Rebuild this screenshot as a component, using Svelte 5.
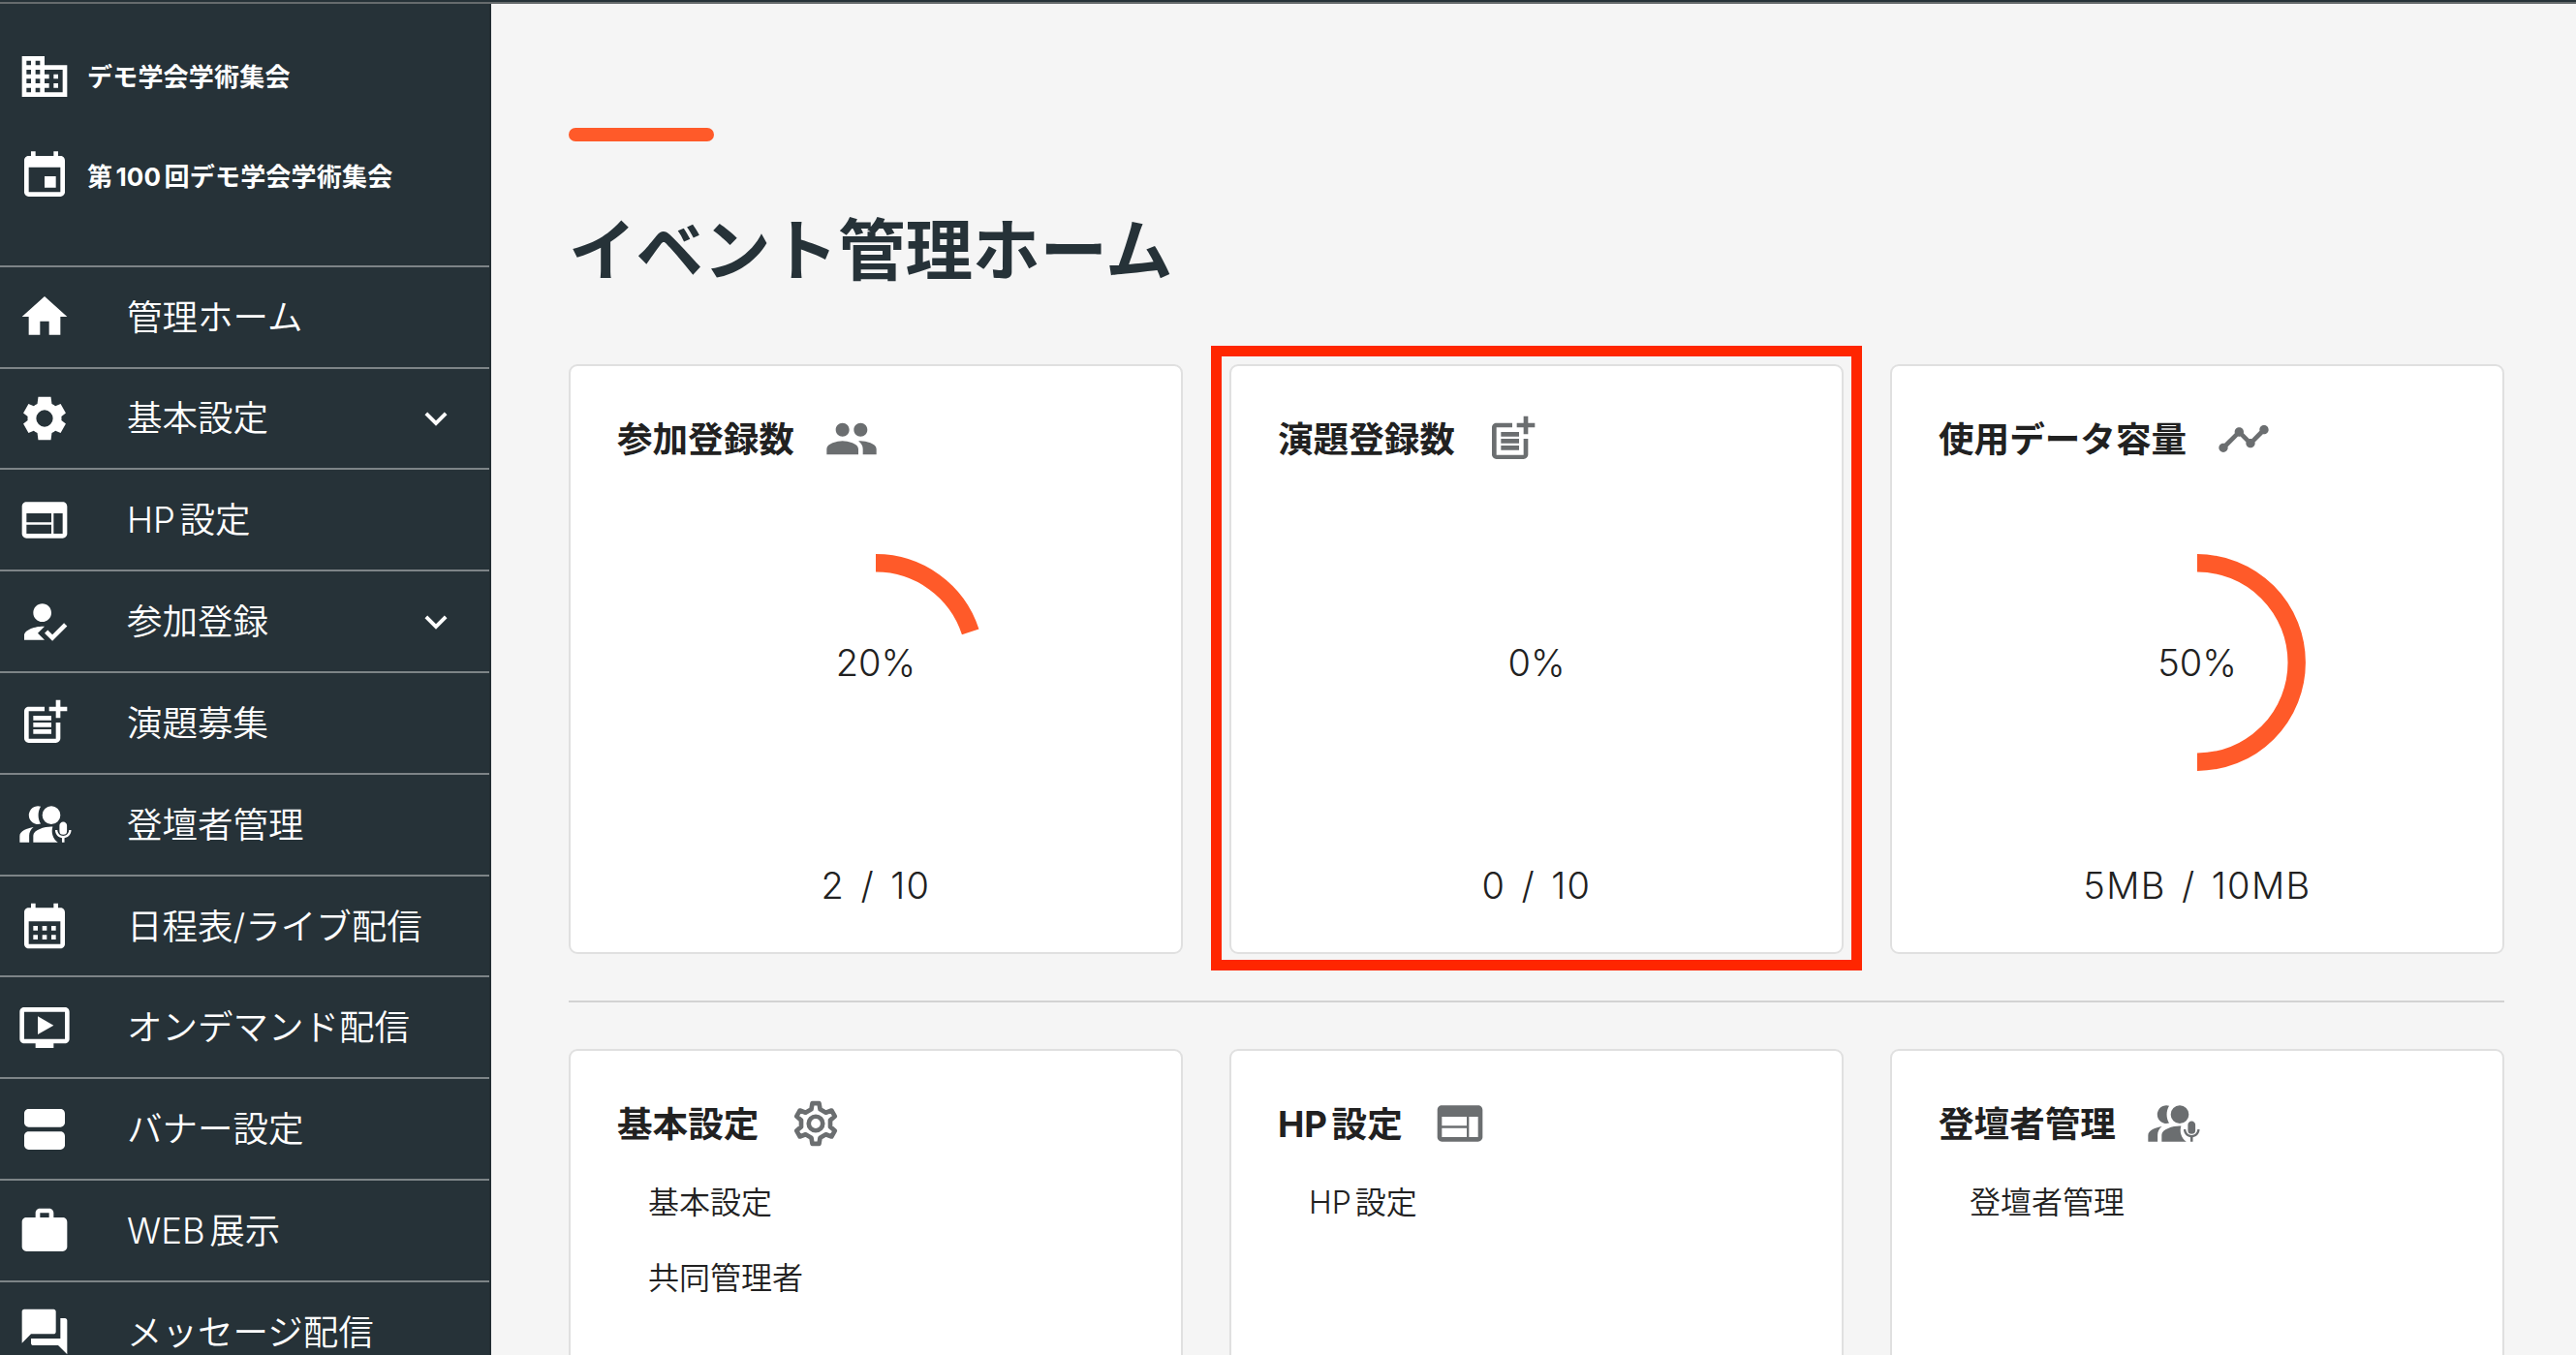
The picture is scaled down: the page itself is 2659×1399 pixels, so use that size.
<script lang="ts">
	type Menu = { icon: string; label: string; open?: boolean };

	const icons: Record<string, string> = {
		domain:
			'M12 7V3H2v18h20V7H12zM6 19H4v-2h2v2zm0-4H4v-2h2v2zm0-4H4V9h2v2zm0-4H4V5h2v2zm4 12H8v-2h2v2zm0-4H8v-2h2v2zm0-4H8V9h2v2zm0-4H8V5h2v2zm10 12h-8v-2h2v-2h-2v-2h2v-2h-2V9h8v10zm-2-8h-2v2h2v-2zm0 4h-2v2h2v-2z',
		event:
			'M17 12h-5v5h5v-5zM16 1v2H8V1H6v2H5c-1.11 0-1.99.9-1.99 2L3 19c0 1.1.89 2 2 2h14c1.1 0 2-.9 2-2V5c0-1.1-.9-2-2-2h-1V1h-2zm3 18H5V8h14v11z',
		home: 'M10 20v-6h4v6h5v-8h3L12 3 2 12h3v8z',
		settings:
			'M19.5 12c0-.3 0-.6-.05-.9l1.95-1.5-2.3-4-2.3.95c-.5-.4-1-.7-1.6-.95L14.8 2.5H9.2l-.4 3.1c-.6.25-1.1.55-1.6.95L4.9 5.6l-2.3 4 1.95 1.5c-.05.3-.05.6-.05.9s0 .6.05.9L2.6 14.4l2.3 4 2.3-.95c.5.4 1 .7 1.6.95l.4 3.1h5.6l.4-3.1c.6-.25 1.1-.55 1.6-.95l2.3.95 2.3-4-1.95-1.5c.05-.3.05-.6.05-.9zM12 15.7a3.7 3.7 0 1 1 0-7.4 3.7 3.7 0 0 1 0 7.4z',
		web: 'M20 4H4c-1.1 0-1.99.9-1.99 2L2 18c0 1.1.9 2 2 2h16c1.1 0 2-.9 2-2V6c0-1.1-.9-2-2-2zm-5 14H4v-4h11v4zm0-5H4V9h11v4zm5 5h-4V9h4v9z',
		reg: 'M9 17l3-2.94c-.39-.04-.68-.06-1-.06-2.67 0-8 1.34-8 4v2h9l-3-3zm2-5c2.21 0 4-1.79 4-4s-1.79-4-4-4-4 1.79-4 4 1.79 4 4 4m4.47 8.5L12 17l1.4-1.41 2.07 2.08 5.13-5.17 1.4 1.41z',
		post: 'M17 19.22H5V7h7V5H5c-1.1 0-2 .9-2 2v12c0 1.1.9 2 2 2h12c1.1 0 2-.9 2-2v-7h-2v7.22zM19 2h-2v3h-3v2h3v3h2V7h3V5h-3V2zM7 9h8v2H7zM7 12h8v2H7zM7 15h8v2H7z',
		speaker:
			'M15 4a4 4 0 1 1 0 8 4 4 0 0 1 0-8zM10.3 4.2a4 4 0 1 0 0 7.6C8.9 9.6 8.9 6.4 10.3 4.2zM15.6 13.05C12.9 12.8 7 14.2 7 17v3h10.9c-2.3-1.6-3.1-4.5-2.3-6.95zM7.1 13.3C4.3 13.7 1 15.1 1 17.2V20h4.2v-3c0-1.5.7-2.7 1.9-3.7zM20.25 10.9c.91 0 1.65.74 1.65 1.65v2.4a1.65 1.65 0 0 1-3.3 0v-2.4c0-.91.74-1.65 1.65-1.65zM22.8 14.6h1c0 1.8-1.3 3.2-3 3.5V20h-1.1v-1.9c-1.7-.3-3-1.7-3-3.5h1c0 1.45 1.15 2.5 2.55 2.5s2.55-1.05 2.55-2.5z',
		calendar:
			'M19 4h-1V2h-2v2H8V2H6v2H5c-1.11 0-1.99.9-1.99 2L3 20c0 1.1.89 2 2 2h14c1.1 0 2-.9 2-2V6c0-1.1-.9-2-2-2zm0 16H5V10h14v10zM9 14H7v-2h2v2zm4 0h-2v-2h2v2zm4 0h-2v-2h2v2zm-8 4H7v-2h2v2zm4 0h-2v-2h2v2zm4 0h-2v-2h2v2z',
		video:
			'M21 3H3c-1.11 0-2 .89-2 2v12c0 1.1.89 2 2 2h5v2h8v-2h5c1.1 0 1.99-.9 1.99-2L23 5c0-1.11-.9-2-2-2zm0 14H3V5h18v12zm-5-6l-7 4V7z',
		agenda:
			'M19 13H5c-1.1 0-2 .9-2 2v4c0 1.1.9 2 2 2h14c1.1 0 2-.9 2-2v-4c0-1.1-.9-2-2-2zm0-10H5c-1.1 0-2 .9-2 2v4c0 1.1.9 2 2 2h14c1.1 0 2-.9 2-2V5c0-1.1-.9-2-2-2z',
		work: 'M20 6h-4V4c0-1.11-.89-2-2-2h-4c-1.11 0-2 .89-2 2v2H4c-1.11 0-1.99.89-1.99 2L2 19c0 1.11.89 2 2 2h16c1.11 0 2-.89 2-2V8c0-1.11-.89-2-2-2zm-6 0h-4V4h4v2z',
		chat: 'M21 6h-2v9H6v2c0 .55.45 1 1 1h11l4 4V7c0-.55-.45-1-1-1zm-4 6V3c0-.55-.45-1-1-1H3c-.55 0-1 .45-1 1v14l4-4h10c.55 0 1-.45 1-1z',
		expand: 'M16.59 8.59L12 13.17 7.41 8.59 6 10l6 6 6-6z',
		people:
			'M16 11c1.66 0 2.99-1.34 2.99-3S17.66 5 16 5c-1.66 0-3 1.34-3 3s1.34 3 3 3zm-8 0c1.66 0 2.99-1.34 2.99-3S9.66 5 8 5C6.34 5 5 6.34 5 8s1.34 3 3 3zm0 2c-2.33 0-7 1.17-7 3.5V19h14v-2.5c0-2.33-4.67-3.5-7-3.5zm8 0c-.29 0-.62.02-.97.05 1.16.84 1.97 1.97 1.97 3.45V19h6v-2.5c0-2.33-4.67-3.5-7-3.5z',
		timeline:
			'M23 8c0 1.1-.9 2-2 2-.18 0-.35-.02-.51-.07l-3.56 3.55c.05.16.07.34.07.52 0 1.1-.9 2-2 2s-2-.9-2-2c0-.18.02-.36.07-.52l-2.55-2.55c-.16.05-.34.07-.52.07s-.36-.02-.52-.07l-4.55 4.56c.05.16.07.33.07.51 0 1.1-.9 2-2 2s-2-.9-2-2 .9-2 2-2c.18 0 .35.02.51.07l4.56-4.55C8.02 9.36 8 9.18 8 9c0-1.1.9-2 2-2s2 .9 2 2c0 .18-.02.36-.07.52l2.55 2.55c.16-.05.34-.07.52-.07s.36.02.52.07l3.55-3.56C19.02 8.35 19 8.18 19 8c0-1.1.9-2 2-2s2 .9 2 2z'
	};

	const menus: Menu[] = [
		{ icon: 'home', label: '管理ホーム' },
		{ icon: 'settings', label: '基本設定', open: false },
		{ icon: 'web', label: 'HP設定' },
		{ icon: 'reg', label: '参加登録', open: false },
		{ icon: 'post', label: '演題募集' },
		{ icon: 'speaker', label: '登壇者管理' },
		{ icon: 'calendar', label: '日程表/ライブ配信' },
		{ icon: 'video', label: 'オンデマンド配信' },
		{ icon: 'agenda', label: 'バナー設定' },
		{ icon: 'work', label: 'WEB展示' },
		{ icon: 'chat', label: 'メッセージ配信' }
	];

	const stats = [
		{ title: '参加登録数', icon: 'people', percent: 20, usage: '2 / 10' },
		{ title: '演題登録数', icon: 'post', percent: 0, usage: '0 / 10', marked: true },
		{ title: '使用データ容量', icon: 'timeline', percent: 50, usage: '5MB / 10MB' }
	];

	const links = [
		{ title: '基本設定', icon: 'settings-outline', items: ['基本設定', '共同管理者'] },
		{ title: 'HP設定', icon: 'web', items: ['HP設定'] },
		{ title: '登壇者管理', icon: 'speaker', items: ['登壇者管理'] }
	];
</script>

{#snippet icon(name: string)}
	<svg class="icon" viewBox="0 0 24 24" aria-hidden="true">
		{#if name === 'settings-outline'}
			<g fill="none" stroke="currentColor" stroke-width="2" stroke-linejoin="round">
				<path
					d="M10.05 5.7l.45-2.65h3l.45 2.65 2.53 1.46L19 6.22l1.5 2.6-2.07 1.72v2.92l2.07 1.72-1.5 2.6-2.52-.94-2.53 1.46-.45 2.65h-3l-.45-2.65-2.53-1.46L5 17.78l-1.5-2.6 2.07-1.72v-2.92L3.5 8.82 5 6.22l2.52.94z"
				/>
				<circle cx="12" cy="12" r="3.1" />
			</g>
		{:else}
			<path d={icons[name]} fill="currentColor" />
		{/if}
	</svg>
{/snippet}

<div class="app">
	<div class="topline"></div>
	<div class="body">
		<aside class="sidebar">
			<div class="context">
				<div class="context-row">{@render icon('domain')}<span>デモ学会学術集会</span></div>
				<div class="context-row">{@render icon('event')}<span>第100回デモ学会学術集会</span></div>
			</div>
			<nav>
				{#each menus as menu}
					<a class="menu" href="#top">
						{@render icon(menu.icon)}
						<span class="label">{menu.label}</span>
						{#if menu.open !== undefined}
							<span class="chevron">{@render icon('expand')}</span>
						{/if}
					</a>
				{/each}
			</nav>
		</aside>

		<main>
			<div class="accent"></div>
			<h1>イベント管理ホーム</h1>

			<section class="grid">
				{#each stats as stat}
					<article class="card stat">
						<h2><span>{stat.title}</span>{@render icon(stat.icon)}</h2>
						<div class="gauge">
							<svg viewBox="0 0 224 224">
								{#if stat.percent > 0}
									<circle
										cx="112"
										cy="112"
										r="102.7"
										pathLength="100"
										stroke-dasharray="{stat.percent} 100"
									/>
								{/if}
							</svg>
							<span>{stat.percent}%</span>
						</div>
						<p class="usage">{stat.usage}</p>
						{#if stat.marked}
							<div class="marker"></div>
						{/if}
					</article>
				{/each}
			</section>

			<hr />

			<section class="grid">
				{#each links as group}
					<article class="card links">
						<h2><span>{group.title}</span>{@render icon(group.icon)}</h2>
						<ul>
							{#each group.items as item}
								<li>{item}</li>
							{/each}
						</ul>
					</article>
				{/each}
			</section>
		</main>
	</div>
</div>

<style>
	:global(body) {
		margin: 0;
		overflow: hidden;
	}

	.app {
		display: flex;
		flex-direction: column;
		height: 1399px;
		overflow: hidden;
		background: #f5f5f5;
		color: #212121;
		font-family: Inter, 'Noto Sans CJK JP', sans-serif;
		font-weight: 350;
		text-autospace: normal;
	}

	.topline {
		flex: none;
		height: 2px;
		background: #263238;
		border-bottom: 2px solid #666b6d;
	}

	.body {
		display: flex;
		flex: 1;
		min-height: 0;
	}

	.icon {
		flex: none;
		display: block;
		width: 56px;
		height: 56px;
	}

	.sidebar {
		flex: none;
		box-sizing: border-box;
		width: 507px;
		border-right: 2px solid #222d32;
		background: #263238;
		color: #fff;
		overflow: hidden;
	}

	.context {
		display: flex;
		flex-direction: column;
		gap: 47px;
		box-sizing: border-box;
		height: 269.7px;
		padding: 47px 0 0 18px;
	}

	.context-row {
		display: flex;
		align-items: center;
		gap: 16px;
		font-size: 26px;
		font-weight: 700;
		white-space: nowrap;
	}

	.context-row span {
		padding-bottom: 4px;
		letter-spacing: 0.2px;
	}

	.menu {
		display: flex;
		align-items: center;
		box-sizing: border-box;
		height: 104.84px;
		padding-left: 18px;
		border-top: 2px solid #7d8487;
		color: inherit;
		text-decoration: none;
	}

	.label {
		margin-left: 57px;
		padding-bottom: 4px;
		font-size: 36.5px;
		white-space: nowrap;
	}

	.chevron {
		margin-left: auto;
		margin-right: 32px;
	}

	.chevron .icon {
		width: 46px;
		height: 46px;
	}

	main {
		flex: 1;
		min-width: 0;
		padding: 128px 74px 0 80px;
	}

	.accent {
		width: 150px;
		height: 14px;
		border-radius: 7px;
		background: #ff5a29;
	}

	h1 {
		margin: 62px 0 66px;
		color: #263238;
		font-size: 69.5px;
		font-weight: 700;
		line-height: 102px;
	}

	.grid {
		display: grid;
		grid-template-columns: repeat(3, 1fr);
		gap: 48px;
	}

	.card {
		position: relative;
		box-sizing: border-box;
		padding: 47px 48px 0;
		border: 2px solid #e0e0e0;
		border-radius: 9px;
		background: #fff;
	}

	.stat {
		height: 609px;
	}

	.links {
		height: 400px;
	}

	h2 {
		display: flex;
		align-items: center;
		gap: 31px;
		height: 56px;
		margin: 0;
		font-size: 36.6px;
		font-weight: 700;
	}

	h2 span {
		padding-bottom: 4px;
	}

	h2 .icon {
		color: #6b6e70;
	}

	.gauge {
		position: relative;
		display: grid;
		place-items: center;
		width: 224px;
		height: 224px;
		margin: 91px auto 0;
		font-size: 38px;
		font-weight: 300;
	}

	.gauge svg {
		position: absolute;
		inset: 0;
		transform: rotate(-90deg);
	}

	.gauge circle {
		fill: none;
		stroke: #ff5a29;
		stroke-width: 18.4;
	}

	.usage {
		margin: 90px 0 0;
		font-size: 38px;
		font-weight: 300;
		line-height: 56px;
		letter-spacing: 1.4px;
		word-spacing: 4px;
		text-align: center;
	}

	/* frame drawn around the highlighted card */
	.marker {
		position: absolute;
		inset: -21px -20.5px -19px -21px;
		border: 11px solid #ff2600;
		pointer-events: none;
	}

	hr {
		height: 2px;
		margin: 48px 0;
		border: 0;
		background: #d2d2d2;
	}

	ul {
		margin: 15px 0 0;
		padding: 0 0 0 32px;
		list-style: none;
	}

	li {
		font-size: 32px;
		line-height: 78px;
	}
</style>
